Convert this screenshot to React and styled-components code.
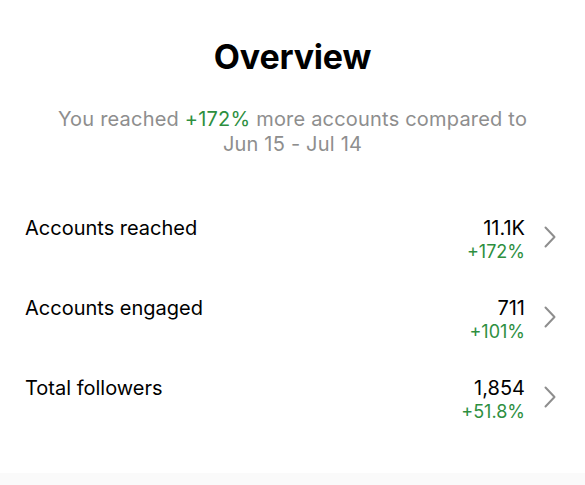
import React from 'react'
import styled, { createGlobalStyle } from 'styled-components'

const GlobalStyle = createGlobalStyle`
    html, body {
        margin: 0;
        padding: 0;
        background: #ffffff;
    }
    body {
        font-family: Inter, "Liberation Sans", sans-serif;
        -webkit-font-smoothing: antialiased;
    }
`;

const Page = styled.div`
    width: 585px;
    height: 485px;
    display: flex;
    flex-direction: column;
    background: #ffffff;
    overflow: hidden;
`;

const Header = styled.div`
    display: flex;
    flex-direction: column;
    align-items: center;
    padding-top: 36px;
`;

const Title = styled.h1`
    margin: 0;
    font-size: 34px;
    line-height: 42px;
    font-weight: 700;
    color: #000;
    letter-spacing: -0.2px;
`;

const Summary = styled.p`
    margin: 29px 0 0;
    width: 484px;
    text-align: center;
    font-size: 20px;
    line-height: 25px;
    letter-spacing: 0.2px;
    color: #8e8e8e;
    span {
        color: #2e8f3f;
    }
`;

const List = styled.div`
    display: flex;
    flex-direction: column;
    gap: 30px;
    padding: 59px 29px 0 25px;
    flex: 1;
`;

const Row = styled.div`
    display: flex;
    align-items: flex-start;
    height: 50px;
`;

const Label = styled.div`
    flex: 1;
    font-size: 20px;
    line-height: 24px;
    color: #000;
`;

const Values = styled.div`
    display: flex;
    flex-direction: column;
    align-items: flex-end;
`;

const Value = styled.div`
    font-size: 20px;
    line-height: 24px;
    color: #000;
`;

const Change = styled.div`
    font-size: 18px;
    line-height: 24px;
    color: #2e8f3f;
`;

const Chevron = styled.svg`
    width: 12px;
    height: 22px;
    margin: 10px 0 0 19px;
    flex-shrink: 0;
`;

const Footer = styled.div`
    height: 12px;
    background: #fafafa;
`;

const rows = [
    { label: 'Accounts reached', value: '11.1K', change: '+172%' },
    { label: 'Accounts engaged', value: '711', change: '+101%' },
    { label: 'Total followers', value: '1,854', change: '+51.8%' },
];

export default function App() {
    return (
        <>
            <GlobalStyle />
            <Page>
                <Header>
                    <Title>Overview</Title>
                    <Summary>
                        You reached <span>+172%</span> more accounts compared to Jun 15 - Jul 14
                    </Summary>
                </Header>
                <List>
                    {rows.map(r => (
                        <Row key={r.label}>
                            <Label>{r.label}</Label>
                            <Values>
                                <Value>{r.value}</Value>
                                <Change>{r.change}</Change>
                            </Values>
                            <Chevron viewBox="0 0 12 22" fill="none">
                                <path d="M1.5 1.5 L10.5 11 L1.5 20.5" stroke="#8e8e8e" strokeWidth="2" strokeLinecap="round" strokeLinejoin="round" />
                            </Chevron>
                        </Row>
                    ))}
                </List>
                <Footer />
            </Page>
        </>
    )
}
